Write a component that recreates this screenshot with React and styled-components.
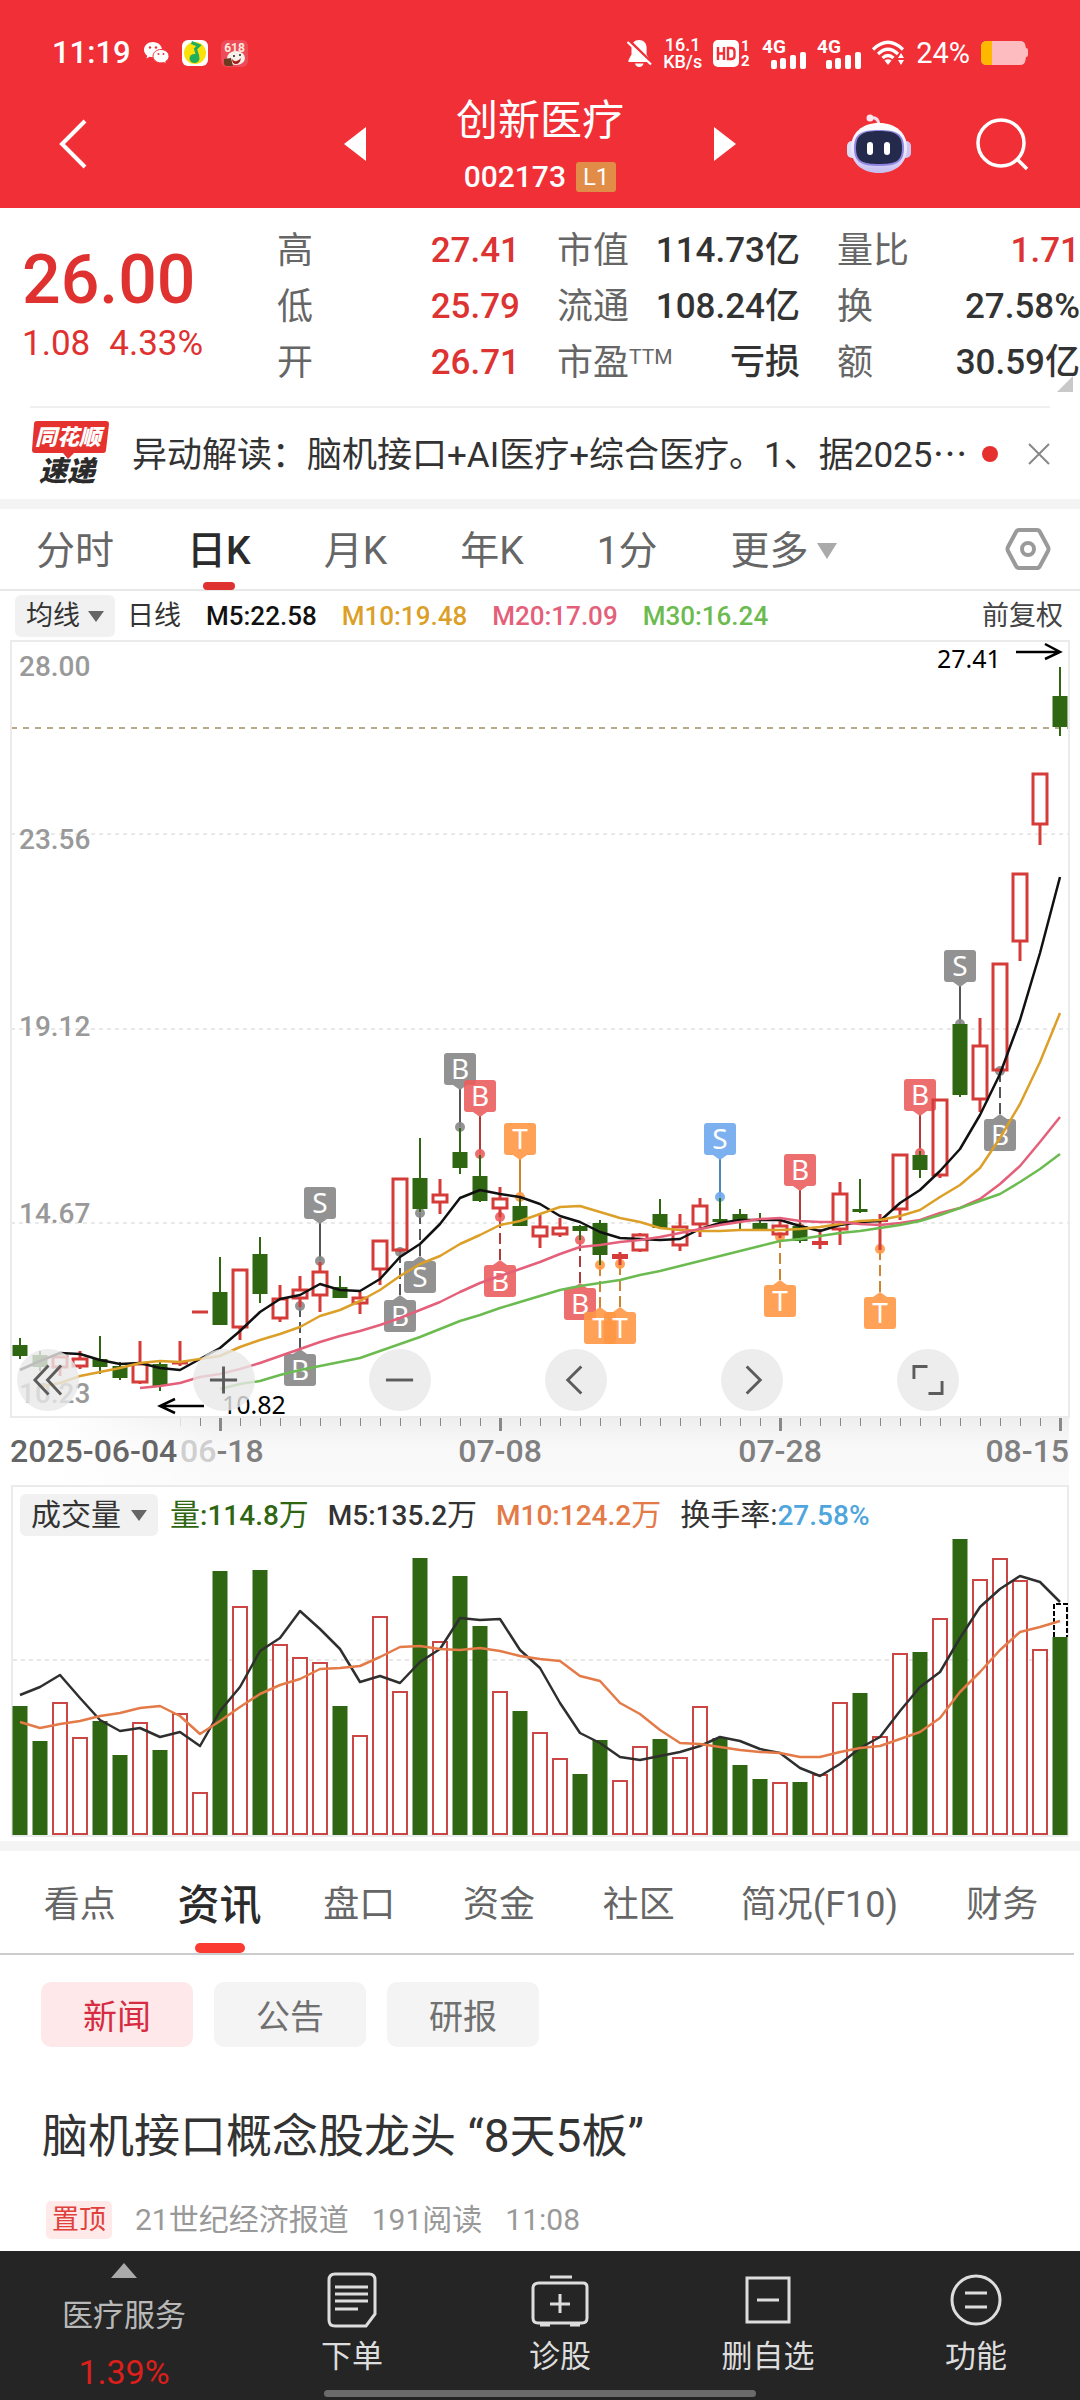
import React from 'react';
import styled, { createGlobalStyle } from 'styled-components';

const GlobalStyle = createGlobalStyle`
    * {
        box-sizing: border-box;
    }

    body {
        margin: 0;
        background: #ffffff;
        color: #333333;
        font-family: Roboto, 'Noto Sans CJK SC', sans-serif;
    }

    button,
    select {
        border: 0;
        padding: 0;
        margin: 0;
        background: none;
        color: inherit;
        font: inherit;
        cursor: pointer;
    }

    a {
        color: inherit;
        text-decoration: none;
    }

    h1, h2, p, dl, dt, dd {
        margin: 0;
        font-weight: 400;
    }

    svg {
        display: block;
        flex-shrink: 0;
        overflow: visible;
    }
`;

const Page = styled.div`
    min-height: 100vh;
    display: flex;
    flex-direction: column;
`;

const Header = styled.header`
    background: #f12f37;
    color: #ffffff;
    padding: 36px 52px 15px;
`;

const StatusBar = styled.div`
    display: flex;
    align-items: center;
    justify-content: space-between;
    height: 34px;
`;

const StatusGroup = styled.div`
    display: flex;
    align-items: center;
    gap: ${props => props.$gap}px;
`;

const Clock = styled.span`
    font-size: 31px;
    line-height: 34px;
    font-weight: 500;
`;

const NetSpeed = styled.span`
    font-size: 18px;
    line-height: 17px;
    font-weight: 500;
    text-align: center;
`;

const BatteryText = styled.span`
    font-size: 29px;
    line-height: 34px;
`;

const TitleBar = styled.div`
    display: grid;
    grid-template-columns: 1fr 392px 1fr;
    align-items: center;
    padding-top: 25px;
`;

const IconButton = styled.button`
    display: block;
    justify-self: start;
`;

const StockSwitch = styled.div`
    display: flex;
    align-items: center;
    justify-content: space-between;
`;

const StockTitle = styled.div`
    display: flex;
    flex-direction: column;
    align-items: center;
    gap: 16px;
    padding-top: 2px;
`;

const StockName = styled.h1`
    font-size: 42px;
    line-height: 48px;
`;

const StockCode = styled.div`
    display: flex;
    align-items: center;
    gap: 10px;
    font-size: 30px;
    line-height: 32px;
    font-weight: 500;
`;

const LevelBadge = styled.span`
    background: #e28d47;
    border-radius: 3px;
    padding: 0 7px;
    font-size: 24px;
    line-height: 30px;
    font-weight: 400;
`;

const HeaderActions = styled.div`
    display: flex;
    align-items: center;
    justify-content: flex-end;
    gap: 65px;
`;

const Quote = styled.section`
    position: relative;
    display: grid;
    grid-template-columns: 277px 1fr;
    padding: 15px 0;
`;

const PriceBlock = styled.div`
    padding: 19px 0 0 22px;
    color: #e03131;
`;

const Price = styled.p`
    font-size: 68px;
    line-height: 76px;
    font-weight: 500;
`;

const Change = styled.p`
    display: flex;
    gap: 19px;
    margin-top: 6px;
    font-size: 35px;
    line-height: 40px;
`;

const StatGrid = styled.dl`
    display: grid;
    grid-template-columns: repeat(3, 1fr);
    column-gap: 37px;
`;

const Stat = styled.div`
    display: flex;
    justify-content: space-between;
    align-items: center;
    height: 56px;
    font-size: 36px;
    line-height: 40px;
    white-space: nowrap;
`;

const StatLabel = styled.dt`
    display: flex;
    align-items: flex-start;
    color: #666666;
`;

const StatSup = styled.sup`
    font-size: 21px;
    line-height: 28px;
`;

const StatValue = styled.dd`
    font-size: 35px;
    font-weight: 500;
    color: ${props => (props.$up ? '#dd3333' : '#333333')};
`;

const Corner = styled.svg`
    position: absolute;
    right: 7px;
    bottom: 14px;
`;

const Brief = styled.section`
    display: flex;
    align-items: center;
    margin: 0 30px;
    height: 93px;
    border-top: 2px solid #efefef;
`;

const BriefText = styled.a`
    flex: 1;
    margin: 0 8px 0 23px;
    font-size: 35px;
    line-height: 44px;
    white-space: nowrap;
`;

const Dots = styled.span`
    font-family: 'Noto Sans CJK SC', sans-serif;
`;

const RedDot = styled.span`
    flex-shrink: 0;
    width: 16px;
    height: 16px;
    margin-right: 30px;
    border-radius: 50%;
    background: #e6302f;
`;

const Divider = styled.div`
    height: 10px;
    background: #f4f4f4;
`;

const PeriodTabs = styled.nav`
    display: flex;
    align-items: center;
    gap: 73px;
    height: 82px;
    padding: 0 30px 0 36px;
    border-bottom: 2px solid #e8e8e8;
`;

const PeriodTab = styled.button`
    position: relative;
    display: flex;
    align-items: center;
    gap: 8px;
    height: 82px;
    padding-top: 4px;
    font-size: 39px;
    line-height: 78px;
    color: ${props => (props.$active ? '#2b2b2b' : '#666666')};
    font-weight: ${props => (props.$active ? 500 : 400)};

    &::after {
        content: '';
        display: ${props => (props.$active ? 'block' : 'none')};
        position: absolute;
        left: 50%;
        bottom: 0;
        width: 32px;
        height: 8px;
        margin-left: -16px;
        border-radius: 4px;
        background: #e03131;
    }
`;

const PushRight = styled.button`
    margin-left: auto;
`;

const MaLegend = styled.div`
    display: flex;
    align-items: center;
    gap: 25px;
    height: 50px;
    padding: 0 17px 0 15px;
    font-size: 27px;
    line-height: 36px;
`;

const SelectBox = styled.label`
    display: flex;
    align-items: center;
    gap: ${props => props.$gap || 8}px;
    height: 42px;
    margin-right: ${props => props.$pull || 0}px;
    padding: 0 11px;
    border-radius: 6px;
    background: #f1f1f1;
    color: #333333;

    select {
        appearance: none;
        height: 42px;
    }
`;

const LegendValue = styled.span`
    font-size: 26px;
    font-weight: 500;
    color: ${props => props.$color};
`;

const Adjust = styled.button`
    margin-left: auto;
    color: #444444;
`;

const ChartArea = styled.section`
    position: relative;
`;

const ChartSvg = styled.svg`
    width: 100%;
    height: auto;
`;

const ChartControls = styled.div`
    position: absolute;
    left: 17px;
    bottom: 74px;
    display: flex;
    gap: 114px;
`;

const RoundButton = styled.button`
    display: flex;
    align-items: center;
    justify-content: center;
    width: 62px;
    height: 62px;
    border-radius: 50%;
    background: rgba(232, 232, 232, 0.8);
`;

const VolumePanel = styled.section`
    margin: 0 11px 4px;
    border: 2px solid #ebebeb;
`;

const VolumeLegend = styled.div`
    display: flex;
    align-items: center;
    gap: 19px;
    height: 49px;
    padding: 7px 7px 0;
    font-size: 30px;
    line-height: 40px;
    white-space: nowrap;
`;

const VolumeValue = styled.span`
    color: ${props => props.$color};

    b {
        font-size: 28px;
        font-weight: 500;
        color: ${props => props.$strong || 'inherit'};
    }
`;

const InfoTabs = styled.nav`
    display: grid;
    grid-template-columns: repeat(5, 140fr) 222fr 144fr;
    margin-right: 6px;
    padding-left: 10px;
    height: 104px;
    border-bottom: 2px solid #cccccc;
`;

const InfoTab = styled.button`
    position: relative;
    padding-bottom: 2px;
    white-space: nowrap;
    font-size: ${props => (props.$active ? 42 : 36)}px;
    font-weight: ${props => (props.$active ? 500 : 400)};
    color: ${props => (props.$active ? '#2b2b2b' : '#666666')};

    &::after {
        content: '';
        display: ${props => (props.$active ? 'block' : 'none')};
        position: absolute;
        left: 50%;
        bottom: 0;
        width: 50px;
        height: 10px;
        margin-left: -25px;
        border-radius: 5px;
        background: #fb3a31;
    }
`;

const Pills = styled.div`
    display: flex;
    gap: 21px;
    padding: 27px 41px 0;
`;

const Pill = styled.button`
    width: 152px;
    height: 65px;
    border-radius: 10px;
    font-size: 34px;
    background: ${props => (props.$active ? '#ffe8ea' : '#f4f4f4')};
    color: ${props => (props.$active ? '#d62b40' : '#707070')};
`;

const Article = styled.article`
    padding: 57px 42px 10px;
`;

const ArticleTitle = styled.h2`
    font-size: 46px;
    line-height: 64px;
`;

const ArticleMeta = styled.div`
    display: flex;
    align-items: center;
    gap: 23px;
    margin-top: 33px;
    padding-left: 4px;
    font-size: 30px;
    line-height: 36px;
    color: #999999;
`;

const TopTag = styled.span`
    padding: 0 6px;
    border-radius: 5px;
    background: #ffe9e9;
    color: #e0413c;
    font-size: 27px;
    line-height: 38px;
`;

const BottomBar = styled.footer`
    position: sticky;
    bottom: 0;
    display: grid;
    grid-template-columns: 248fr repeat(4, 208fr);
    height: 149px;
    margin-top: auto;
    background: #252525;
    color: #dddddd;
`;

const Sector = styled.button`
    display: flex;
    flex-direction: column;
    align-items: center;
    padding-top: 12px;
    font-size: 31px;
    line-height: 38px;
    color: #b8b8b8;

    svg {
        margin-bottom: 19px;
    }
`;

const SectorChange = styled.span`
    margin-top: 18px;
    font-size: 34px;
    color: #dc1f1b;
`;

const BarItem = styled.button`
    display: flex;
    flex-direction: column;
    align-items: center;
    gap: 8px;
    padding-top: 21px;
    font-size: 31px;
    line-height: 38px;
`;

const HomeIndicator = styled.div`
    position: absolute;
    left: 30%;
    right: 30%;
    bottom: 3px;
    height: 7px;
    border-radius: 4px;
    background: #6b6b6b;
`;

const GREEN = '#2f6612';
const RED = '#d53c39';

// x of the n-th trading day on both charts
const dayX = i => 20 + i * 20;

// [direction, high, body top, body bottom, low]
const candles = [
    ['g', 1338, 1345, 1356, 1359], ['g', 1351, 1355, 1367, 1371], ['r', 1356, 1356, 1368, 1376],
    ['r', 1351, 1358, 1367, 1369], ['g', 1336, 1359, 1367, 1374], ['g', 1362, 1366, 1378, 1380],
    ['r', 1341, 1363, 1383, 1384], ['g', 1362, 1364, 1386, 1391], ['r', 1341, 1362, 1364, 1366],
    ['r', 1311, 1311, 1313, 1313], ['g', 1257, 1292, 1325, 1325], ['r', 1269, 1269, 1328, 1340],
    ['g', 1237, 1254, 1294, 1303], ['r', 1285, 1298, 1319, 1322], ['r', 1276, 1289, 1299, 1307],
    ['r', 1262, 1271, 1296, 1312], ['g', 1276, 1287, 1298, 1298], ['r', 1292, 1297, 1304, 1314],
    ['r', 1240, 1240, 1270, 1285], ['r', 1178, 1178, 1251, 1252], ['g', 1138, 1178, 1209, 1212],
    ['r', 1179, 1194, 1203, 1214], ['g', 1128, 1152, 1168, 1174], ['g', 1155, 1176, 1201, 1202],
    ['r', 1187, 1198, 1209, 1217], ['g', 1197, 1206, 1226, 1226], ['r', 1215, 1226, 1237, 1248],
    ['r', 1218, 1227, 1235, 1237], ['g', 1225, 1226, 1231, 1240], ['g', 1220, 1223, 1255, 1265],
    ['r', 1252, 1254, 1259, 1265], ['r', 1233, 1234, 1251, 1252], ['g', 1199, 1214, 1228, 1228],
    ['r', 1214, 1226, 1246, 1251], ['r', 1198, 1205, 1225, 1237], ['g', 1198, 1219, 1222, 1222],
    ['g', 1209, 1214, 1220, 1229], ['g', 1213, 1223, 1229, 1229], ['r', 1220, 1225, 1235, 1238],
    ['g', 1223, 1226, 1241, 1243], ['r', 1229, 1241, 1245, 1249], ['r', 1182, 1193, 1230, 1245],
    ['g', 1179, 1209, 1212, 1213], ['r', 1214, 1219, 1222, 1250], ['r', 1154, 1154, 1210, 1220],
    ['g', 1151, 1155, 1170, 1178], ['r', 1099, 1099, 1176, 1178], ['g', 1024, 1024, 1095, 1097],
    ['r', 1018, 1045, 1100, 1112], ['r', 963, 963, 1071, 1072], ['r', 873, 873, 942, 961],
    ['r', 773, 773, 825, 845], ['g', 667, 696, 727, 736],
];

const averages = [
    {
        color: '#111111',
        from: 0,
        points: [
            1370, 1361, 1353, 1354, 1360, 1364, 1363, 1368, 1370, 1359, 1348, 1331, 1312, 1299, 1295, 1284, 1290, 1291,
            1279, 1257, 1244, 1224, 1198, 1190, 1194, 1197, 1204, 1216, 1222, 1232, 1238, 1239, 1240, 1239, 1229, 1223,
            1220, 1220, 1220, 1226, 1231, 1225, 1222, 1221, 1203, 1190, 1171, 1149, 1115, 1074, 1020, 953, 877,
        ],
    },
    {
        color: '#dc9f28',
        from: 1,
        points: [
            1387, 1383, 1376, 1372, 1368, 1363, 1361, 1362, 1359, 1356, 1347, 1340, 1334, 1327, 1316, 1310, 1301, 1290,
            1276, 1264, 1256, 1244, 1235, 1225, 1221, 1214, 1207, 1206, 1212, 1218, 1222, 1228, 1230, 1231, 1231, 1230,
            1230, 1230, 1229, 1227, 1224, 1221, 1220, 1216, 1210, 1197, 1185, 1168, 1138, 1104, 1062, 1013,
        ],
    },
    {
        color: '#e4607a',
        from: 6,
        points: [
            1388, 1386, 1383, 1377, 1374, 1369, 1363, 1356, 1349, 1342, 1336, 1331, 1325, 1318, 1310, 1302, 1292, 1283,
            1276, 1269, 1262, 1254, 1247, 1245, 1242, 1240, 1237, 1233, 1229, 1225, 1222, 1219, 1218, 1221, 1222, 1222,
            1224, 1225, 1223, 1220, 1213, 1208, 1199, 1184, 1166, 1142, 1117,
        ],
    },
    {
        color: '#6bbb50',
        from: 10,
        points: [
            1389, 1384, 1381, 1375, 1370, 1366, 1362, 1358, 1351, 1344, 1337, 1329, 1321, 1315, 1308, 1302, 1296, 1290,
            1286, 1283, 1280, 1275, 1271, 1266, 1261, 1256, 1251, 1246, 1241, 1239, 1236, 1233, 1231, 1228, 1225, 1221,
            1215, 1208, 1201, 1194, 1182, 1169, 1154,
        ],
    },
];

const markerColors = {
    gray: ['#878787', '#555555'],
    red: ['#ec5f5f', '#b03a3a'],
    orange: ['#ff9845', '#cc8430'],
    blue: ['#6ea8ee', '#4a87bd'],
};

// day index, letter, colour, top of the box, y of the dot
const markers = [
    { day: 14, text: 'B', color: 'gray', box: 1354, dot: 1306 },
    { day: 15, text: 'S', color: 'gray', box: 1187, dot: 1261 },
    { day: 19, text: 'B', color: 'gray', box: 1300, dot: 1252 },
    { day: 20, text: 'S', color: 'gray', box: 1261, dot: 1213 },
    { day: 22, text: 'B', color: 'gray', box: 1053, dot: 1127 },
    { day: 23, text: 'B', color: 'red', box: 1080, dot: 1154 },
    { day: 24, text: 'B', color: 'red', box: 1265, dot: 1217 },
    { day: 25, text: 'T', color: 'orange', box: 1123, dot: 1197 },
    { day: 28, text: 'B', color: 'red', box: 1288, dot: 1240 },
    { day: 29, text: 'T', color: 'orange', box: 1312, dot: 1265 },
    { day: 30, text: 'T', color: 'orange', box: 1312, dot: 1264 },
    { day: 35, text: 'S', color: 'blue', box: 1123, dot: 1197 },
    { day: 38, text: 'T', color: 'orange', box: 1285, dot: 1237 },
    { day: 39, text: 'B', color: 'red', box: 1154, dot: 1228 },
    { day: 43, text: 'T', color: 'orange', box: 1297, dot: 1249 },
    { day: 45, text: 'B', color: 'red', box: 1079, dot: 1153 },
    { day: 47, text: 'S', color: 'gray', box: 950, dot: 1024 },
    { day: 49, text: 'B', color: 'gray', box: 1119, dot: 1071 },
];

const volumes = [
    'g1706', 'g1741', 'r1703', 'r1738', 'g1721', 'g1755', 'r1723', 'g1750', 'r1714', 'r1793', 'g1571',
    'r1607', 'g1570', 'r1645', 'r1658', 'r1663', 'g1706', 'r1736', 'r1617', 'r1692', 'g1558', 'r1642',
    'g1576', 'g1626', 'r1692', 'g1711', 'r1733', 'r1759', 'g1774', 'g1740', 'r1781', 'r1747', 'g1739',
    'r1758', 'r1707', 'g1738', 'g1765', 'g1779', 'r1783', 'g1782', 'r1775', 'r1703', 'g1693', 'r1737',
    'r1654', 'g1652', 'r1619', 'g1539', 'r1580', 'r1559', 'r1581', 'r1650', 'g1637',
];

const volumeAverages = [
    {
        color: '#2f2f2f',
        from: 0,
        points: [
            1695, 1687, 1675, 1698, 1720, 1731, 1728, 1737, 1732, 1746, 1711, 1687, 1651, 1638, 1611, 1629, 1649, 1682,
            1676, 1683, 1662, 1649, 1618, 1620, 1619, 1650, 1668, 1703, 1733, 1743, 1757, 1760, 1756, 1752, 1746, 1737,
            1741, 1749, 1753, 1768, 1776, 1764, 1748, 1737, 1711, 1687, 1672, 1638, 1607, 1589, 1576, 1582, 1602,
        ],
    },
    {
        color: '#e47a48',
        from: 0,
        points: [
            1722, 1728, 1724, 1721, 1716, 1713, 1708, 1706, 1716, 1734, 1721, 1707, 1694, 1685, 1679, 1669, 1668, 1666,
            1657, 1647, 1646, 1649, 1650, 1648, 1651, 1656, 1659, 1661, 1676, 1681, 1703, 1714, 1730, 1743, 1744, 1747,
            1750, 1752, 1753, 1757, 1757, 1752, 1748, 1746, 1739, 1732, 1718, 1692, 1672, 1650, 1632, 1627, 1621,
        ],
    },
];

function MaLine({ line, width }) {
    const points = line.points.map((y, i) => `${dayX(i + line.from)},${y}`).join(' ');
    return <polyline points={points} fill="none" stroke={line.color} strokeWidth={width} strokeLinejoin="round" />;
}

function Candle({ day, data }) {
    const [dir, high, top, bottom, low] = data;
    const x = dayX(day);
    if (dir === 'g') {
        return (
            <g fill={GREEN}>
                <rect x={x - 1} y={high} width={2} height={low - high} />
                <rect x={x - 7.5} y={top} width={15} height={bottom - top} />
            </g>
        );
    }
    return (
        <g stroke={RED} strokeWidth={3} fill="none">
            {high < top && <path d={`M${x} ${high}V${top}`} />}
            {low > bottom && <path d={`M${x} ${bottom}V${low}`} />}
            {bottom - top < 7 ? (
                <path d={`M${x - 8} ${(top + bottom) / 2}h16`} strokeWidth={Math.max(3, bottom - top)} />
            ) : (
                <rect x={x - 7} y={top + 1} width={14} height={bottom - top - 2} />
            )}
        </g>
    );
}

function Marker({ day, text, color, box, dot }) {
    const x = dayX(day);
    const above = box < dot;
    const [fill, stroke] = markerColors[color];
    return (
        <g>
            {above ? (
                <path d={`M${x} ${box + 36}V${dot}`} stroke={stroke} strokeWidth={2} />
            ) : (
                <path d={`M${x} ${dot}V${box - 4}`} stroke={stroke} strokeWidth={2} strokeDasharray="11 5" />
            )}
            <circle cx={x} cy={dot} r={5} fill={fill} opacity={0.9} />
            <g opacity={0.9}>
                <rect x={x - 16} y={box} width={32} height={32} rx={3} fill={fill} />
                <path
                    d={above ? `M${x - 7} ${box + 32}h14l-7 5z` : `M${x - 7} ${box}h14l-7 -5z`}
                    fill={fill}
                />
                <text x={x} y={box + 26} fill="#ffffff" fontSize={28} fontFamily="Noto Sans" textAnchor="middle">
                    {text}
                </text>
            </g>
        </g>
    );
}

function PriceChart() {
    const ticks = candles.map((_, i) => i).filter(i => i >= 8);
    return (
        <ChartSvg viewBox="0 641 1080 844" role="img" aria-label="日K线图">
            <defs>
                <linearGradient id="axisFade" x1="0" y1="0" x2="0" y2="1">
                    <stop offset="0" stopColor="#eeeeee" />
                    <stop offset="0.4" stopColor="#f8f8f8" />
                    <stop offset="1" stopColor="#fafafa" />
                </linearGradient>
                <linearGradient id="axisLeft" x1="0" y1="0" x2="1" y2="0">
                    <stop offset="0.2" stopColor="#ffffff" />
                    <stop offset="1" stopColor="#ffffff" stopOpacity="0" />
                </linearGradient>
            </defs>

            <rect x={12} y={1418} width={1057} height={67} fill="url(#axisFade)" />
            <rect x={12} y={1418} width={210} height={67} fill="url(#axisLeft)" />
            <path d="M11 834H1069M11 1223H1069" stroke="#d4d4d4" strokeWidth={1} strokeDasharray="4 4" />
            <path d="M11 1029H1069" stroke="#e8e8e8" strokeWidth={2} strokeDasharray="4 4" />
            <path d="M11 728H1069" stroke="#b8a987" strokeWidth={2} strokeDasharray="6 6" />
            <rect x={11} y={641} width={1058} height={776} fill="none" stroke="#ebebeb" strokeWidth={2} />

            <g fill="#999999" fontSize={28} fontWeight={500}>
                <text x={19} y={676}>28.00</text>
                <text x={19} y={849}>23.56</text>
                <text x={19} y={1036}>19.12</text>
                <text x={19} y={1223}>14.67</text>
                <text x={19} y={1403}>10.23</text>
            </g>

            {markers.map(m => (
                <Marker key={m.day} {...m} />
            ))}
            {candles.map((data, i) => (
                <Candle key={i} day={i} data={data} />
            ))}
            {averages.map(line => (
                <MaLine key={line.color} line={line} width={2.5} />
            ))}

            <g stroke="#000000" strokeWidth={2.5} fill="none">
                <path d="M1016 652H1060M1045 644L1060 652L1045 659" />
                <path d="M204 1406H160M175 1399L160 1406L175 1413" />
            </g>
            <g fill="#000000" fontFamily="Noto Sans" fontSize={25}>
                <text x={937} y={668}>27.41</text>
                <text x={222} y={1414}>10.82</text>
            </g>

            {ticks.map(i => (
                <rect
                    key={i}
                    x={dayX(i) - (i % 14 === 10 ? 1 : 0)}
                    y={1418}
                    width={i % 14 === 10 ? 3 : 1}
                    height={i % 14 === 10 ? 13 : 8}
                    fill={i === 8 ? '#dddddd' : '#888888'}
                />
            ))}
            <g fill="#808080" fontSize={32} fontWeight={500}>
                <text x={10} y={1462} fill="#666666">2025-06-04</text>
                <text x={180} y={1462}>
                    <tspan fill="#cfcfcf">06</tspan>-18
                </text>
                <text x={500} y={1462} textAnchor="middle">07-08</text>
                <text x={780} y={1462} textAnchor="middle">07-28</text>
                <text x={1069} y={1462} textAnchor="end">08-15</text>
            </g>
        </ChartSvg>
    );
}

function VolumeChart() {
    return (
        <ChartSvg viewBox="13 1536 1054 299" role="img" aria-label="成交量图">
            <path d="M13 1660H1067" stroke="#e8e8e8" strokeWidth={2} strokeDasharray="4 4" />
            {volumes.map((item, i) => {
                const top = Number(item.slice(1));
                return item[0] === 'g' ? (
                    <rect key={i} x={dayX(i) - 7.5} y={top} width={15} height={1835 - top} fill={GREEN} />
                ) : (
                    <rect
                        key={i}
                        x={dayX(i) - 7}
                        y={top}
                        width={14}
                        height={1834 - top}
                        fill="#ffffff"
                        stroke="#cb4745"
                        strokeWidth={2}
                    />
                );
            })}
            <path d="M1054 1637V1604H1067V1637" fill="#ffffff" stroke="#000000" strokeWidth={2} strokeDasharray="5 2" />
            {volumeAverages.map(line => (
                <MaLine key={line.color} line={line} width={2.5} />
            ))}
        </ChartSvg>
    );
}

function Caret({ width = 16, height = 11, color = '#666666', up }) {
    return (
        <svg width={width} height={height} viewBox="0 0 16 11" preserveAspectRatio="none" aria-hidden="true">
            <path d={up ? 'M0 11h16L8 0z' : 'M0 0h16L8 11z'} fill={color} />
        </svg>
    );
}

function WechatIcon() {
    return (
        <svg width="25" height="22" viewBox="0 0 25 22" fill="#ffffff">
            <path d="M9 0C4 0 0 3.400 0 7.800c0 2.400 1.200 4.500 3.200 5.900L2.400 16.500l3.200-1.700c1 .3 2.200.5 3.400.5C14 15.300 18 12 18 7.800S14 0 9 0z" />
            <path
                d="M17 7.500c-4.400 0-8 3-8 6.700s3.600 6.700 8 6.700c1 0 1.900-.1 2.700-.4l2.700 1.400-.7-2.400c2-1.200 3.300-3.100 3.300-5.300 0-3.700-3.600-6.700-8-6.700z"
                stroke="#f12f37"
                strokeWidth="1"
            />
            <g fill="#f12f37">
                <circle cx="6" cy="5.500" r="1.200" />
                <circle cx="12" cy="5.500" r="1.200" />
                <circle cx="14.500" cy="12" r="1" />
                <circle cx="19.500" cy="12" r="1" />
            </g>
        </svg>
    );
}

function MusicIcon() {
    return (
        <svg width="26" height="26" viewBox="0 0 26 26">
            <rect width="26" height="26" rx="6" fill="#ffffff" />
            <circle cx="13" cy="13" r="11" fill="#fbe009" />
            <path d="M9.500 2.500L17 5.500L13.500 9L16 17" fill="none" stroke="#1fae5c" strokeWidth="3" />
            <ellipse cx="12.500" cy="18.500" rx="5" ry="4.500" fill="#1fae5c" />
        </svg>
    );
}

function ShopIcon() {
    return (
        <svg width="27" height="27" viewBox="0 0 27 27">
            <rect width="27" height="27" rx="6" fill="#ee4b5a" />
            <ellipse cx="15" cy="18" rx="9" ry="7" fill="#f7efe9" />
            <text x="13.500" y="12" fontSize="12" fontWeight="700" fill="#ffe9da" textAnchor="middle">618</text>
            <path d="M3 19l7-1 2 8H6q-3 0-3-3z" fill="#6b3a1f" />
            <path d="M11 19q4 5 9-1-1 6-5 6t-4-5z" fill="#a4201f" />
            <circle cx="13" cy="16" r="1" fill="#222222" />
            <circle cx="19" cy="15" r="1" fill="#222222" />
        </svg>
    );
}

function BellOffIcon() {
    return (
        <svg width="25" height="27" viewBox="0 0 25 27">
            <path d="M12 0c4.600 0 7.600 3.200 7.600 8v6.500l3 5.500v2H1.500v-2l3-5.500V8C4.500 3.200 7.500 0 12 0zM8 23.500h8.500C16 25.700 14.500 27 12.300 27S8.500 25.700 8 23.500z" fill="#ffffff" />
            <path d="M2.500 1l23 22.500" stroke="#f12f37" strokeWidth="3" />
            <path d="M.5 2l23.500 22.500" stroke="#ffffff" strokeWidth="2.200" />
        </svg>
    );
}

function HdIcon() {
    return (
        <svg width="38" height="27" viewBox="0 0 38 27">
            <rect width="26" height="27" rx="5" fill="#ffffff" />
            <path d="M5 7v13M11 7v13M5 13.500h6M15 8v11h3q3.500 0 3.500-3.500v-4Q21.500 8 18 8z" fill="none" stroke="#f12f37" strokeWidth="2.400" />
            <g fill="#ffffff" fontSize="15" fontWeight="700">
                <text x="28" y="11">1</text>
                <text x="28" y="26">2</text>
            </g>
        </svg>
    );
}

function SignalIcon() {
    return (
        <svg width="44" height="31" viewBox="0 0 44 31" fill="#ffffff">
            <text x="0" y="15" fontSize="19" fontWeight="700">4G</text>
            <rect x="9" y="22" width="6" height="9" rx="2" />
            <rect x="18" y="20" width="6" height="11" rx="2" />
            <rect x="28" y="17" width="6" height="14" rx="2" />
            <rect x="38" y="14" width="6" height="17" rx="2" />
        </svg>
    );
}

function WifiIcon() {
    return (
        <svg width="33" height="26" viewBox="0 0 33 26">
            <g fill="none" stroke="#ffffff" strokeWidth="3.200">
                <path d="M1 9.500Q16 -5 31 9.500" />
                <path d="M6 14Q16 4.500 26 14" />
                <path d="M10.500 18Q16 13 21.500 18" />
            </g>
            <path d="M12.500 20.500Q16 18 19.500 20.500L16 25z" fill="#ffffff" />
            <path d="M26 18l3-5 3 5zM26 20h6l-3 5z" fill="#ffffff" />
        </svg>
    );
}

function BatteryIcon() {
    return (
        <svg width="47" height="24" viewBox="0 0 47 24">
            <path d="M6 0h33q5 0 5.500 5l.5 2q2 0 2 2v5q0 2-2 2l-.500 3q-.500 5-5.500 5H6q-6 0-6-6V6q0-6 6-6z" fill="#fcbcc0" />
            <path d="M6 0h5v24H6q-6 0-6-6V6q0-6 6-6z" fill="#ffb800" />
        </svg>
    );
}

function RobotIcon() {
    return (
        <svg width="64" height="60" viewBox="0 0 64 60">
            <defs>
                <linearGradient id="robotShell" x1="0" y1="0" x2="0" y2="1">
                    <stop offset="0" stopColor="#ffffff" />
                    <stop offset="0.600" stopColor="#e9e4fb" />
                    <stop offset="1" stopColor="#c3bdf0" />
                </linearGradient>
            </defs>
            <path d="M23 4Q31 2 32 11" fill="none" stroke="#f3dcea" strokeWidth="3" />
            <circle cx="23" cy="4" r="3.500" fill="#fbe6ef" />
            <rect x="0" y="27" width="12" height="17" rx="5" fill="#dcdcf6" />
            <rect x="52" y="27" width="12" height="17" rx="5" fill="#cfc6f3" />
            <path d="M32 9C49 9 60 19 60 34S49 59 32 59 4 49 4 34 15 9 32 9z" fill="url(#robotShell)" />
            <path d="M32 16C50 16 57 20 57 34S50 52 32 52 7 48 7 34 14 16 32 16z" fill="#8f86e0" />
            <path d="M32 17C49 17 55 21 55 34S49 50 32 50 9 47 9 34 15 17 32 17z" fill="#232a4b" />
            <rect x="20" y="28" width="6" height="13" rx="3" fill="#ffffff" />
            <rect x="37" y="28" width="6" height="13" rx="3" fill="#ffffff" />
        </svg>
    );
}

function BriefLogo() {
    return (
        <svg width="79" height="66" viewBox="0 0 79 66" role="img" aria-label="同花顺速递">
            <path d="M7 0h69q3 0 3 3l-3 26q0 3-3 3H44l-6 6-5-6H5q-3 0-3-3L4 3q0-3 3-3z" fill="#e5322f" />
            <g fontWeight="900" fontStyle="italic">
                <text x="38" y="24" fontSize="22" fill="#ffffff" textAnchor="middle">同花顺</text>
                <text x="37" y="60" fontSize="28" fill="#2b2b2b" textAnchor="middle">速递</text>
            </g>
        </svg>
    );
}

const stats = [
    { label: '高', value: '27.41', up: true },
    { label: '市值', value: '114.73亿' },
    { label: '量比', value: '1.71', up: true },
    { label: '低', value: '25.79', up: true },
    { label: '流通', value: '108.24亿' },
    { label: '换', value: '27.58%' },
    { label: '开', value: '26.71', up: true },
    { label: '市盈', sup: 'TTM', value: '亏损' },
    { label: '额', value: '30.59亿' },
];

const controls = [
    { name: '最早', path: 'M28 -1L14 14L28 29M15 -1L1 14L15 29' },
    { name: '放大', path: 'M14 0V28M0 14H28' },
    { name: '缩小', path: 'M0 14H28' },
    { name: '左移', path: 'M20 0L6 14L20 28' },
    { name: '右移', path: 'M9 0L23 14L9 28' },
    { name: '全屏', path: 'M14 0H0V13M29 15V28H15' },
];

const barItems = [
    {
        name: '下单',
        icon: (
            <>
                <path d="M10 2H44Q50 2 50 8V42L41 54H10Q4 54 4 48V8Q4 2 10 2z" />
                <path d="M10 15H43M10 22H43M10 29H43M10 37H33" />
            </>
        ),
    },
    {
        name: '诊股',
        icon: (
            <>
                <path d="M6 11H50Q54 11 54 15V46Q54 51 49 51H5Q0 51 0 46V16Q0 11 6 11z" />
                <path d="M17 5H39M27 22V41M17 32H37M7 53H17M37 53H47" />
            </>
        ),
    },
    { name: '删自选', icon: <path d="M6 6H48V50H6zM16 28H38" /> },
    {
        name: '功能',
        icon: (
            <>
                <circle cx="27" cy="28" r="24" />
                <path d="M16 21H38M16 35H38" />
            </>
        ),
    },
];

function App() {
    return (
        <Page>
            <GlobalStyle />
            <Header>
                <StatusBar>
                    <StatusGroup $gap={13}>
                        <Clock>11:19</Clock>
                        <WechatIcon />
                        <MusicIcon />
                        <ShopIcon />
                    </StatusGroup>
                    <StatusGroup $gap={11}>
                        <BellOffIcon />
                        <NetSpeed>
                            16.1
                            <br />
                            KB/s
                        </NetSpeed>
                        <HdIcon />
                        <SignalIcon />
                        <SignalIcon />
                        <WifiIcon />
                        <BatteryText>24%</BatteryText>
                        <BatteryIcon />
                    </StatusGroup>
                </StatusBar>
                <TitleBar>
                    <IconButton aria-label="返回">
                        <svg width="40" height="50" viewBox="0 0 40 50">
                            <path d="M33 2L10 25L33 48" fill="none" stroke="#ffffff" strokeWidth="4" />
                        </svg>
                    </IconButton>
                    <StockSwitch>
                        <IconButton aria-label="上一只">
                            <svg width="22" height="34" viewBox="0 0 22 34">
                                <path d="M22 0V34L0 17z" fill="#ffffff" />
                            </svg>
                        </IconButton>
                        <StockTitle>
                            <StockName>创新医疗</StockName>
                            <StockCode>
                                002173 <LevelBadge>L1</LevelBadge>
                            </StockCode>
                        </StockTitle>
                        <IconButton aria-label="下一只">
                            <svg width="22" height="34" viewBox="0 0 22 34">
                                <path d="M0 0V34L22 17z" fill="#ffffff" />
                            </svg>
                        </IconButton>
                    </StockSwitch>
                    <HeaderActions>
                        <IconButton aria-label="智能助手">
                            <RobotIcon />
                        </IconButton>
                        <IconButton aria-label="搜索">
                            <svg width="52" height="52" viewBox="0 0 52 52" fill="none" stroke="#ffffff" strokeWidth="3.500">
                                <circle cx="25" cy="25" r="23" />
                                <path d="M41 41L51 51" />
                            </svg>
                        </IconButton>
                    </HeaderActions>
                </TitleBar>
            </Header>

            <Quote>
                <PriceBlock>
                    <Price>26.00</Price>
                    <Change>
                        <span>1.08</span>
                        <span>4.33%</span>
                    </Change>
                </PriceBlock>
                <StatGrid>
                    {stats.map(stat => (
                        <Stat key={stat.label}>
                            <StatLabel>
                                {stat.label}
                                {stat.sup && <StatSup>{stat.sup}</StatSup>}
                            </StatLabel>
                            <StatValue $up={stat.up}>{stat.value}</StatValue>
                        </Stat>
                    ))}
                </StatGrid>
                <Corner width="16" height="16" viewBox="0 0 16 16" aria-hidden="true">
                    <path d="M16 0V16H0z" fill="#c9c9c9" />
                </Corner>
            </Quote>

            <Brief>
                <BriefLogo />
                <BriefText href="#brief">
                    异动解读：脑机接口+AI医疗+综合医疗。1、据2025<Dots>…</Dots>
                </BriefText>
                <RedDot />
                <IconButton aria-label="关闭">
                    <svg width="22" height="22" viewBox="0 0 22 22">
                        <path d="M1 1L21 21M21 1L1 21" stroke="#888888" strokeWidth="2" />
                    </svg>
                </IconButton>
            </Brief>

            <Divider />

            <PeriodTabs>
                <PeriodTab>分时</PeriodTab>
                <PeriodTab $active>日K</PeriodTab>
                <PeriodTab>月K</PeriodTab>
                <PeriodTab>年K</PeriodTab>
                <PeriodTab>1分</PeriodTab>
                <PeriodTab aria-haspopup="menu">
                    更多
                    <Caret width={20} height={16} color="#aaaaaa" />
                </PeriodTab>
                <PushRight aria-label="图表设置">
                    <svg width="44" height="42" viewBox="0 0 44 42" fill="none" stroke="#9a9a9a" strokeWidth="4">
                        <path d="M13 2H31Q33 2 34 4L42 19Q43 21 42 23L34 38Q33 40 31 40H13Q11 40 10 38L2 23Q1 21 2 19L10 4Q11 2 13 2z" />
                        <circle cx="22" cy="21" r="6" />
                    </svg>
                </PushRight>
            </PeriodTabs>

            <MaLegend>
                <SelectBox $pull={-13}>
                    <select aria-label="主图指标">
                        <option>均线</option>
                    </select>
                    <Caret />
                </SelectBox>
                <span>日线</span>
                <LegendValue $color="#111111">M5:22.58</LegendValue>
                <LegendValue $color="#dc9f28">M10:19.48</LegendValue>
                <LegendValue $color="#e4607a">M20:17.09</LegendValue>
                <LegendValue $color="#6bbb50">M30:16.24</LegendValue>
                <Adjust>前复权</Adjust>
            </MaLegend>

            <ChartArea>
                <PriceChart />
                <ChartControls>
                    {controls.map(control => (
                        <RoundButton key={control.name} aria-label={control.name}>
                            <svg width="32" height="32" viewBox="-2 -2 33 32" fill="none" stroke="#5c5c5c" strokeWidth="3">
                                <path d={control.path} />
                            </svg>
                        </RoundButton>
                    ))}
                </ChartControls>
            </ChartArea>

            <VolumePanel>
                <VolumeLegend>
                    <SelectBox $gap={10} $pull={-7}>
                        <select aria-label="副图指标">
                            <option>成交量</option>
                        </select>
                        <Caret />
                    </SelectBox>
                    <VolumeValue $color={GREEN}>
                        量<b>:114.8</b>万
                    </VolumeValue>
                    <VolumeValue $color="#333333">
                        <b>M5:135.2</b>万
                    </VolumeValue>
                    <VolumeValue $color="#e47a48">
                        <b>M10:124.2</b>万
                    </VolumeValue>
                    <VolumeValue $color="#333333" $strong="#4ea6dd">
                        换手率:<b>27.58%</b>
                    </VolumeValue>
                </VolumeLegend>
                <VolumeChart />
            </VolumePanel>

            <Divider />

            <InfoTabs>
                <InfoTab>看点</InfoTab>
                <InfoTab $active>资讯</InfoTab>
                <InfoTab>盘口</InfoTab>
                <InfoTab>资金</InfoTab>
                <InfoTab>社区</InfoTab>
                <InfoTab>简况(F10)</InfoTab>
                <InfoTab>财务</InfoTab>
            </InfoTabs>

            <Pills>
                <Pill $active>新闻</Pill>
                <Pill>公告</Pill>
                <Pill>研报</Pill>
            </Pills>

            <Article>
                <ArticleTitle>
                    <a href="#article">脑机接口概念股龙头 “8天5板”</a>
                </ArticleTitle>
                <ArticleMeta>
                    <TopTag>置顶</TopTag>
                    <span>21世纪经济报道</span>
                    <span>191阅读</span>
                    <span>11:08</span>
                </ArticleMeta>
            </Article>

            <BottomBar>
                <Sector>
                    <Caret up width={26} height={15} color="#aaaaaa" />
                    医疗服务
                    <SectorChange>1.39%</SectorChange>
                </Sector>
                {barItems.map(item => (
                    <BarItem key={item.name}>
                        <svg width="56" height="58" viewBox="-1 0 56 58" fill="none" stroke="#dddddd" strokeWidth="3">
                            {item.icon}
                        </svg>
                        {item.name}
                    </BarItem>
                ))}
                <HomeIndicator />
            </BottomBar>
        </Page>
    );
}

export default App;
